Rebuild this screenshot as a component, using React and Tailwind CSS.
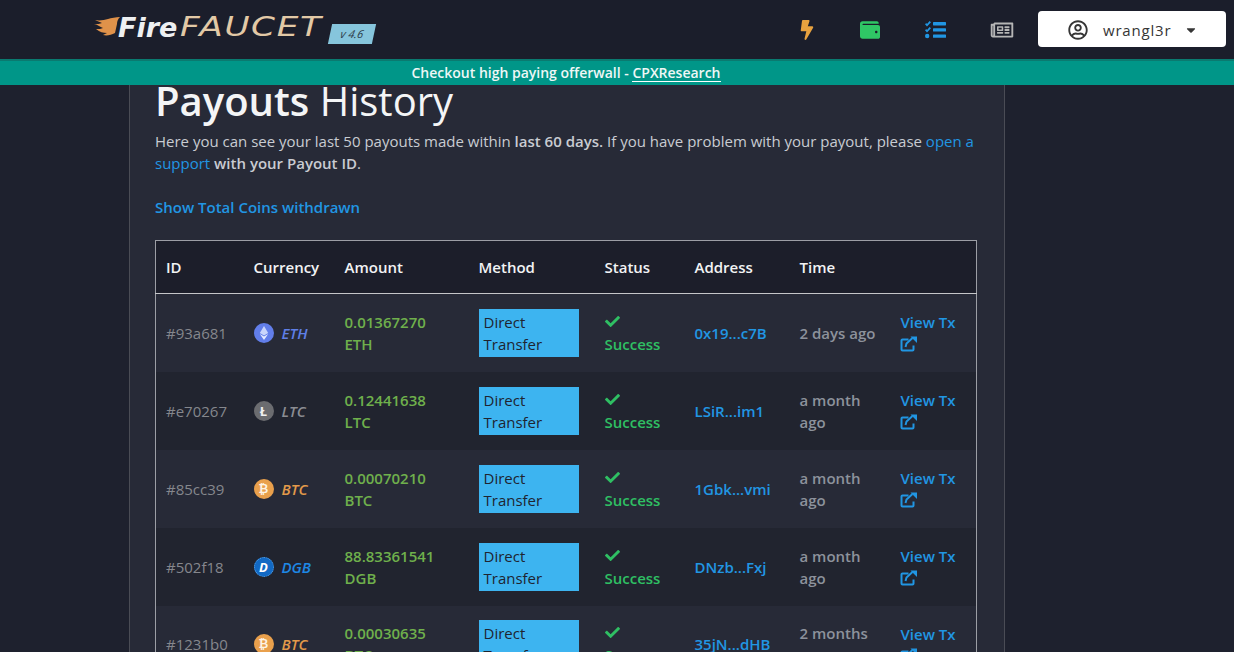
import React from 'react';
import { FaBolt, FaWallet, FaRegNewspaper, FaRegUserCircle, FaCaretDown, FaCheck } from 'react-icons/fa';

const rows = [
  { id: '#93a681', coin: 'ETH', amount: '0.01367270', address: '0x19...c7B', time: '2 days ago' },
  { id: '#e70267', coin: 'LTC', amount: '0.12441638', address: 'LSiR...im1', time: 'a month ago' },
  { id: '#85cc39', coin: 'BTC', amount: '0.00070210', address: '1Gbk...vmi', time: 'a month ago' },
  { id: '#502f18', coin: 'DGB', amount: '88.83361541', address: 'DNzb...Fxj', time: 'a month ago' },
  { id: '#1231b0', coin: 'BTC', amount: '0.00030635', address: '35jN...dHB', time: '2 months ago' },
];

const coinLabel = { ETH: 'text-[#5f7fe6]', LTC: 'text-[#8b8d93]', BTC: 'text-[#e39a4a]', DGB: 'text-[#1e88e5]' };

const CoinIcon = ({ coin }) => {
  if (coin === 'ETH') {
    return (
      <svg width="20" height="20" viewBox="0 0 20 20" className="shrink-0">
        <circle cx="10" cy="10" r="10" fill="#627eea" />
        <path d="M10 3l4.2 7L10 12.5 5.8 10z" fill="#c9d5fb" />
        <path d="M10 13.4l4.2-2.5L10 17l-4.2-6.1z" fill="#e6ecff" />
      </svg>
    );
  }
  if (coin === 'LTC') {
    return (
      <span className="flex h-5 w-5 shrink-0 items-center justify-center rounded-full bg-[#6b6c70] text-[13px] font-bold text-[#f0f0f0]">Ł</span>
    );
  }
  if (coin === 'BTC') {
    return (
      <span className="flex h-5 w-5 shrink-0 items-center justify-center rounded-full bg-[#e9a04c] text-[12px] font-bold text-[#fdf3e4]">₿</span>
    );
  }
  return (
    <span className="flex h-5 w-5 shrink-0 items-center justify-center rounded-full border border-dotted border-[#5aa7ee] bg-[#1269c4] text-[13px] font-bold italic text-white">D</span>
  );
};

const ExternalIcon = () => (
  <svg width="18" height="16" viewBox="0 0 18 16" fill="none" className="ml-[-1px] mt-[3px] block">
    <path d="M13.5 9.5v4a1 1 0 0 1-1 1h-10a1 1 0 0 1-1-1v-9a1 1 0 0 1 1-1h6" stroke="#2196e3" strokeWidth="2" />
    <path d="M5.5 11l1-3.5L12.5 2" stroke="#2196e3" strokeWidth="2" />
    <path d="M10.5 0.5H17V7z" fill="#2196e3" />
  </svg>
);

const TasksIcon = () => (
  <svg width="22" height="18" viewBox="0 0 22 18" fill="#2196e3" className="mr-[44px]">
    <path d="M1 3.2l1.3-1.1L3 3l2.6-3L7 1.2 3 5.6z" />
    <path d="M1 9.2l1.3-1.1L3 9l2.6-3L7 7.2l-4 4.4z" />
    <circle cx="3.2" cy="15" r="2.2" />
    <rect x="9" y="1" width="13" height="3.4" rx="0.6" />
    <rect x="9" y="7.2" width="13" height="3.4" rx="0.6" />
    <rect x="9" y="13.4" width="13" height="3.4" rx="0.6" />
  </svg>
);

const Row = ({ row, even }) => (
  <tr className={`h-[78px] ${even ? 'bg-[#21242f]' : 'bg-[#272a37]'}`}>
    <td className="pl-[10px] pr-2 text-[#85878d]">{row.id}</td>
    <td className="pl-[10px]">
      <div className="flex items-center gap-[8px]">
        <CoinIcon coin={row.coin} />
        <span className={`text-[15px] font-semibold italic ${coinLabel[row.coin]}`}>{row.coin}</span>
      </div>
    </td>
    <td className="pl-[10px] font-semibold text-[#6fb04c]">
      {row.amount}
      <br />
      {row.coin}
    </td>
    <td className="pl-[10px]">
      <div className="h-12 w-[100px] bg-[#3db4f0] pl-[5px] pt-[2px] font-medium text-[#1f2430]">
        Direct
        <br />
        Transfer
      </div>
    </td>
    <td className="pl-[10px] font-semibold text-[#2fbf63]">
      <FaCheck className="mb-[4px] mt-[3px] h-[15px] w-[15px]" />
      Success
    </td>
    <td className="pl-[10px] font-semibold text-[#2196e3]">{row.address}</td>
    <td className="pl-[10px] pr-2 font-semibold text-[#8d929c]">{row.time}</td>
    <td className="pl-[10px] font-semibold text-[#2196e3]">
      View Tx
      <div className="h-[18px]">
        <ExternalIcon />
      </div>
    </td>
  </tr>
);

export default function App() {
  return (
    <div className="h-[652px] overflow-hidden bg-[#1e212e] text-[15px] leading-[22px] text-[#c9ccd2] [font-family:'Open_Sans',sans-serif]">
      <header className="flex h-[59px] items-center bg-[#1b1e2b] pl-[94px] pr-2">
        <div className="flex items-center">
          <svg width="26" height="22" viewBox="0 0 26 22" className="mr-[-2px] mt-[-4px]">
            <path d="M1 3c5 1 9 0 13-1 3-1 8-2 12-2-2 2-3 4-3 7l-2 9c-4 2-8 3-12 2l4-2C9 16 6 15 2 12c3 0 5 0 7-1C6 10 3 7 0 7c3 0 6 0 8-1C6 5 3 4 1 3z" fill="#e0924a" />
          </svg>
          <span className="mt-[-5px] text-[27px] leading-none font-bold italic text-[#eef0f2] [font-family:'DejaVu_Sans',sans-serif]">Fire</span>
          <span className="ml-[3px] mr-[36px] mt-[-5px] origin-left scale-x-[1.32] text-[26px] leading-none italic tracking-[1.2px] text-[#e2c9a6] [font-family:'DejaVu_Sans',sans-serif]">FAUCET</span>
          <span className="ml-[6px] mt-[9px] flex h-5 w-[44px] -skew-x-12 items-center justify-center bg-[#86c5dc] text-[11px] italic text-[#2c3a48]">v 4.6</span>
        </div>
        <div className="ml-auto flex items-center">
          <FaBolt className="mr-[45px] h-5 w-[14px] text-[#e8a23f]" />
          <FaWallet className="mr-[43px] h-5 w-[22px] text-[#2fc765]" />
          <TasksIcon />
          <FaRegNewspaper className="mr-[24px] h-5 w-[24px] text-[#b5b5b5]" />
          <div className="mt-[-1px] flex h-9 w-[188px] items-center rounded-[4px] bg-white pl-[30px] pt-[1px] text-[#363636]">
            <FaRegUserCircle className="h-5 w-5" />
            <span className="ml-[15px] font-medium tracking-[0.8px]">wrangl3r</span>
            <FaCaretDown className="ml-[15px] h-[14px] w-[10px]" />
          </div>
        </div>
      </header>
      <div className="flex h-[26px] items-center justify-center border-t-2 border-[#0a7a70] bg-[#009688] pr-[102px] text-[14px] font-semibold text-[#eef7f6]">
        Checkout high paying offerwall -&nbsp;
        <span className="border-b border-white leading-[17px]">CPXResearch</span>
      </div>
      <main className="mx-[129px] h-full w-[876px] border-x border-[#4a4c55] bg-[#272a37] px-[25px]">
        <h1 className="h-[32px] text-[40px] leading-[32px] text-[#f4f5f6]">
          <span className="font-semibold">Payouts</span> History
        </h1>
        <p className="mt-[13px] w-[825px]">
          Here you can see your last 50 payouts made within <b className="font-semibold">last 60 days.</b> If you have problem with your payout, please <a className="text-[#2196e3]">open a support</a> <b className="font-semibold">with your Payout ID</b>.
        </p>
        <a className="mt-[22px] block font-semibold text-[#2196e3]">Show Total Coins withdrawn</a>
        <table className="mt-[22px] w-[821px] table-fixed border border-[#9c9ea5] border-collapse">
          <colgroup>
            <col className="w-[88px]" />
            <col className="w-[91px]" />
            <col className="w-[134px]" />
            <col className="w-[126px]" />
            <col className="w-[90px]" />
            <col className="w-[105px]" />
            <col className="w-[101px]" />
            <col className="w-[86px]" />
          </colgroup>
          <thead>
            <tr className="h-[53px] border-b border-[#c5c6c9] bg-[#1c1e2a] text-left font-semibold text-[#f2f3f4]">
              <th className="pl-[10px] font-semibold">ID</th>
              <th className="pl-[10px] font-semibold">Currency</th>
              <th className="pl-[10px] font-semibold">Amount</th>
              <th className="pl-[10px] font-semibold">Method</th>
              <th className="pl-[10px] font-semibold">Status</th>
              <th className="pl-[10px] font-semibold">Address</th>
              <th className="pl-[10px] font-semibold">Time</th>
              <th />
            </tr>
          </thead>
          <tbody>
            {rows.map((row, i) => (
              <Row key={row.id} row={row} even={i % 2 === 1} />
            ))}
          </tbody>
        </table>
      </main>
    </div>
  );
}
